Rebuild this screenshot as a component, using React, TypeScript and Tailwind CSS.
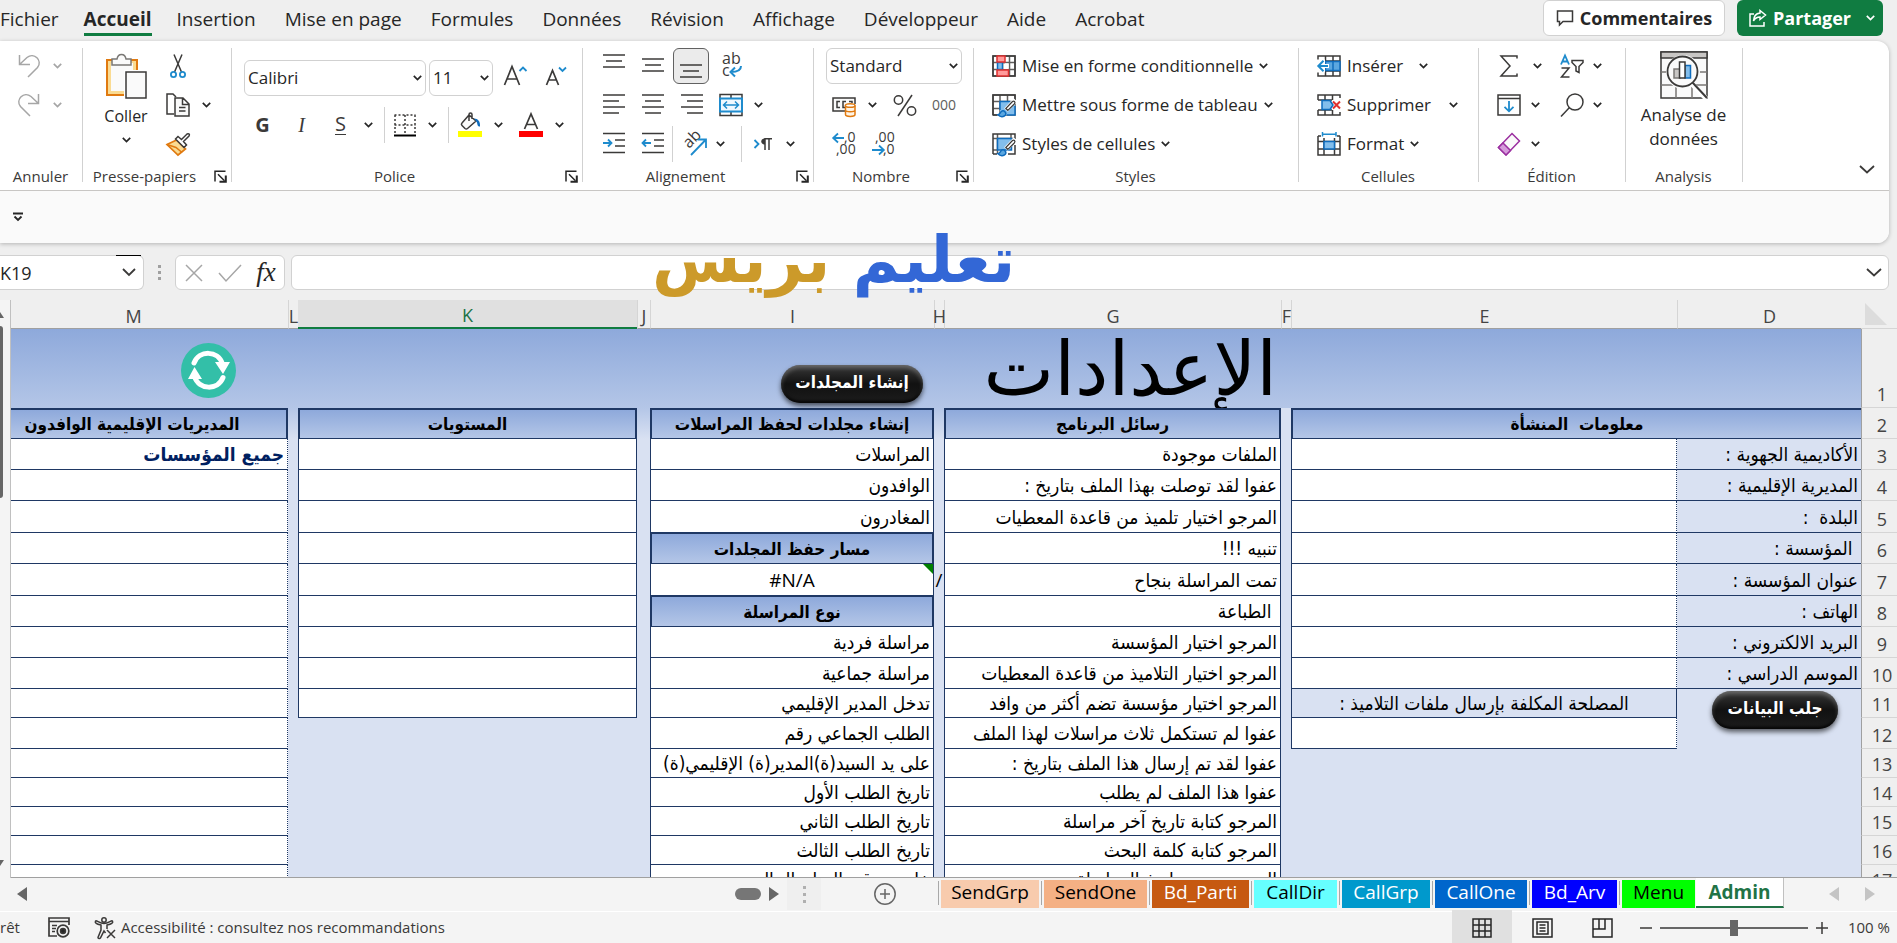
import type { ReactNode } from "react"
import clsx from "clsx"

const MENU = ["Fichier", "Accueil", "Insertion", "Mise en page", "Formules", "Données", "Révision", "Affichage", "Développeur", "Aide", "Acrobat"]

const SHEETS = [
  { name: "SendGrp", style: "w-[98px] bg-[#f8cbad] text-black" },
  { name: "SendOne", style: "w-[103px] bg-[#f4b084] text-black" },
  { name: "Bd_Parti", style: "w-[97px] bg-[#c65911] text-white" },
  { name: "CallDir", style: "w-[83px] bg-[#66ffff] text-black" },
  { name: "CallGrp", style: "w-[88px] bg-[#0099cc] text-white" },
  { name: "CallOne", style: "w-[92px] bg-[#0066cc] text-white" },
  { name: "Bd_Arv", style: "w-[85px] bg-[#0000ff] text-white" },
  { name: "Menu", style: "w-[73px] bg-[#00ff00] text-black" },
]

type Row = { n: number; h: string; d?: string; g: string; i: string; iHead?: boolean }

const ROWS: Row[] = [
  { n: 3, h: "h-[31px]", d: "الأكاديمية الجهوية :", g: "الملفات موجودة", i: "المراسلات" },
  { n: 4, h: "h-[31px]", d: "المديرية الإقليمية :", g: "عفوا لقد توصلت بهذا الملف بتاريخ :", i: "الوافدون" },
  { n: 5, h: "h-[32px]", d: "البلدة\u00a0 :", g: "المرجو اختيار تلميذ من قاعدة المعطيات", i: "المغادرون" },
  { n: 6, h: "h-[31px]", d: "\u00a0المؤسسة :", g: "تنبيه !!!", i: "مسار حفظ المجلدات", iHead: true },
  { n: 7, h: "h-[32px]", d: "عنوان المؤسسة :", g: "تمت المراسلة بنجاح", i: "#N/A" },
  { n: 8, h: "h-[31px]", d: "الهاتف :", g: "\u00a0الطباعة", i: "نوع المراسلة", iHead: true },
  { n: 9, h: "h-[31px]", d: "البريد الالكتروني :", g: "المرجو اختيار المؤسسة", i: "مراسلة فردية" },
  { n: 10, h: "h-[31px]", d: "الموسم الدراسي :", g: "المرجو اختيار التلاميذ من قاعدة المعطيات", i: "مراسلة جماعية" },
  { n: 11, h: "h-[29px]", g: "المرجو اختيار مؤسسة تضم أكثر من وافد", i: "تدخل المدير الإقليمي" },
  { n: 12, h: "h-[31px]", g: "عفوا لم تستكمل ثلاث مراسلات لهذا الملف", i: "الطلب الجماعي رقم" },
  { n: 13, h: "h-[29px]", g: "عفوا لقد تم إرسال هذا الملف بتاريخ :", i: "على يد السيد(ة)المدير(ة) الإقليمي(ة)" },
  { n: 14, h: "h-[29px]", g: "عفوا هذا الملف لم يطلب", i: "تاريخ الطلب الأول" },
  { n: 15, h: "h-[29px]", g: "المرجو كتابة تاريخ آخر مراسلة", i: "تاريخ الطلب الثاني" },
  { n: 16, h: "h-[29px]", g: "المرجو كتابة كلمة البحث", i: "تاريخ الطلب الثالث" },
  { n: 17, h: "h-[29px]", g: "المرجو تحديد تاريخ المراسلة", i: "خاتم وتوقيع السلم الحالي" },
]

const DARK = "#3b3a39"
const BLUE = "#1e8bcd"

function Svg({ children, w = 24, h = 24 }: { children: ReactNode; w?: number; h?: number }) {
  return (
    <svg width={w} height={h} viewBox={`0 0 ${w} ${h}`} fill="none" stroke={DARK} strokeWidth="1.5" className="shrink-0 overflow-visible" aria-hidden="true">
      {children}
    </svg>
  )
}

function Chevron({ className = "text-[#262626]" }: { className?: string }) {
  return (
    <svg width="9" height="6" viewBox="0 0 9 6" fill="none" stroke="currentColor" strokeWidth="1.7" className={clsx("shrink-0", className)} aria-hidden="true">
      <path d="M0.8 0.8 4.5 4.5 8.2 0.8" />
    </svg>
  )
}

function Btn({ label, className, children }: { label: string; className: string; children: ReactNode }) {
  return (
    <button aria-label={label} className={clsx("flex h-9 shrink-0 items-center justify-center", className)}>
      {children}
    </button>
  )
}

function Arrow({ label, className, tone }: { label: string; className: string; tone?: string }) {
  return (
    <Btn label={label} className={className}>
      <Chevron className={tone} />
    </Btn>
  )
}

function Line({ children, className }: { children: ReactNode; className?: string }) {
  return <div className={clsx("flex h-[39px] items-center", className)}>{children}</div>
}

function Sep({ className }: { className?: string }) {
  return <div className={clsx("h-9 w-px shrink-0 bg-[#d1d1d1]", className)} />
}

function Group({ label, launcher, className, body, children }: { label: string; launcher?: boolean; className: string; body?: string; children: ReactNode }) {
  return (
    <section className={clsx("relative flex shrink-0 flex-col pt-[5px]", className)}>
      <div className={clsx("h-[117px]", body)}>{children}</div>
      <div className="flex h-[26px] items-center">
        <span className={clsx("flex-1 text-center text-[15px] whitespace-nowrap text-[#3b3a39]", launcher ? "pr-2" : "pr-[2px]")}>{label}</span>
        {launcher && (
          <button aria-label={`Paramètres ${label}`} className="mr-[5px]">
            <Svg w={13} h={13}>
              <g stroke="#262626">
                <path d="M1 11.5V1.2h10.5M4 4.2l6.5 6.5" />
                <path d="M11.8 5.5v6.3H5.5" strokeWidth="2" />
              </g>
            </Svg>
          </button>
        )}
      </div>
      <div className="absolute top-[7px] right-0 h-[134px] w-px bg-[#d1d1d1]" />
    </section>
  )
}

function Select({ label, value, className }: { label: string; value: string; className: string }) {
  return (
    <div className={clsx("relative shrink-0", className)}>
      <select aria-label={label} className="h-9 w-full appearance-none rounded-md border border-[#d1d1d1] bg-white pl-[3px] text-[17px] text-[#262626]">
        <option>{value}</option>
      </select>
      <Chevron className="pointer-events-none absolute top-[15px] right-1 text-[#262626]" />
    </div>
  )
}

function Lines({ y, x }: { y: number[]; x: [number, number][] }) {
  return (
    <Svg>
      {y.map((v, k) => (
        <path key={v} d={`M${x[k][0]} ${v}H${x[k][1]}`} />
      ))}
    </Svg>
  )
}

function Brush() {
  return (
    <g>
      <path d="M23.5 7 14 17" stroke="#fff" strokeWidth="5" />
      <path d="M22.5 8.5c.8.8.6 1.6-.2 2.5l-6.500 6.500-2-2L20 9c.9-.9 1.700-1.200 2.500-.5z" fill="#fff" strokeWidth="1.200" />
      <path d="M6 21.800c2-.2 2-2 3.300-3.300a2.800 2.800 0 0 1 4 3.800c-1.800 2-5 1.800-7.300-.5z" fill="#5ba7e0" stroke="#0f6cbd" />
    </g>
  )
}

function FormatIcon({ kind }: { kind: "cond" | "table" | "style" }) {
  return (
    <Svg>
      {kind === "cond" && (
        <>
          <path d="M1 2h22v20H1zM1 8.500h22M1 15.500h22M6 2v20M17.500 2v20M12 2v20" stroke="#605e5c" />
          <path d="M1 2h22v20H1z" />
          <path d="M5.500 8.500h5v7h-5z" fill="#83beec" stroke="#0f6cbd" />
          <path d="M11.500 9.500h5v5.500h-5z" fill="#fff" stroke="none" />
          <path d="M5 2h8v6H5zM5 16h11.500v6H5z" fill="#ff9b9b" stroke="#e03030" />
        </>
      )}
      {kind === "table" && (
        <>
          <path d="M1 2h22v20H1zM1 8.500h22M1 15.500h7M8 2v20M15.500 2v7" stroke="#605e5c" />
          <path d="M8 8.500h15V22H8z" fill="#83beec" stroke="none" />
          <path d="M8 17V8.500h10M23 13v9h-8" stroke="#0f6cbd" />
          <path d="M1 22V2h22v5M1 22h4" />
          <Brush />
        </>
      )}
      {kind === "style" && (
        <>
          <path d="M1 6.500h22M5.500 2v20M1 18h5M19 2v4.500" stroke="#605e5c" />
          <path d="M5.500 6.500h14V18h-14z" fill="#83beec" stroke="#0f6cbd" />
          <path d="M1 22V2h22v5M1 22h4M23 13v9h-7" />
          <Brush />
        </>
      )}
    </Svg>
  )
}

function CellsIcon({ kind }: { kind: "insert" | "delete" | "format" }) {
  return (
    <Svg>
      {kind === "insert" && (
        <>
          <path d="M1 6V2h22v20H1v-4M8.500 2v5M16 2v20M8.500 17v5M1 17h22M1 7h22" />
          <path d="M8.500 7.500H23v9H8.500z" fill="#5ba7e0" stroke="#0f6cbd" />
          <path d="M16 7.500v9" stroke="#0f6cbd" />
          <path d="M0 5.500h8v13H0z" fill="#fff" stroke="none" />
          <path d="M12 12H1.500M6.500 6.800 1.300 12l5.200 5.200" stroke="#fff" strokeWidth="4" />
          <path d="M11 12H1.500M6.500 6.800 1.300 12l5.200 5.200" stroke={BLUE} strokeWidth="2" />
        </>
      )}
      {kind === "delete" && (
        <>
          <path d="M1 7V2h22v3M1 7h14M8 2v5M15.500 2v5M1 17v5h22v-3M1 17h14M8 17v5M15.500 17v5" />
          <path d="M5 7.500h8l3 4.500-3 4.500H5z" fill="#83beec" stroke="#0f6cbd" />
          <path d="m16 8.500 7 7M23 8.500l-7 7" stroke="#e03030" strokeWidth="2" />
        </>
      )}
      {kind === "format" && (
        <>
          <path d="M1 4v19h22V4M1 4h3M20 4h3M1 9.500h22M1 17h22M7 6v17M17.500 6v17" />
          <path d="M7 9.500h10.500V17H7z" fill="#83beec" stroke="#0f6cbd" />
          <path d="M5.500 0v4.500M19 0v4.500M5.500 2.200H19" stroke={BLUE} />
        </>
      )}
    </Svg>
  )
}

function TextBtn({ icon, text, arrow }: { icon: ReactNode; text: string; arrow?: string }) {
  return (
    <Line>
      <button className="flex items-center gap-[6px] text-[17px] whitespace-nowrap text-[#262626]">
        {icon}
        {text}
        {!arrow && <Chevron />}
      </button>
      {arrow && <Arrow label={`Options ${text}`} className={arrow} />}
    </Line>
  )
}

function MenuBar() {
  return (
    <header className="flex h-[41px] items-start pr-[14px]">
      <nav className="flex gap-[29px] pt-[7px]">
        {MENU.map((item) => (
          <a
            key={item}
            href="#"
            className={clsx("border-b-[3px] pb-px text-[19px] leading-[25px] whitespace-nowrap text-[#262626]", item === "Accueil" ? "-mx-1 border-[#107c41] font-bold" : "border-transparent")}
          >
            {item}
          </a>
        ))}
      </nav>
      <div className="ml-auto flex gap-3">
        <button className="flex h-9 w-[182px] items-center justify-center gap-[6px] rounded-md border border-[#d1d1d1] bg-white text-lg font-bold text-[#262626]">
          <Svg w={18} h={18}>
            <path d="M1.500 2h15v10.500H7L3.500 16v-3.500h-2z" />
          </Svg>
          Commentaires
        </button>
        <button className="flex h-9 w-[146px] items-center gap-[6px] rounded-md bg-[#107c41] pl-3 text-lg font-bold text-white">
          <svg width="18" height="18" viewBox="0 0 18 18" fill="none" stroke="#fff" strokeWidth="1.500" aria-hidden="true">
            <path d="M5 5H1v12h14v-4" />
            <path d="M11 1.500 16.500 6 11 10.500V8c-3 0-5 1-6.500 4 .2-4.500 2.500-7.500 6.500-8z" />
          </svg>
          Partager
          <Chevron className="mr-2 ml-auto text-white" />
        </button>
      </div>
    </header>
  )
}

function Ribbon() {
  return (
    <div className="mr-2 rounded-r-xl bg-white shadow-[0_1px_4px_rgba(0,0,0,0.25)]">
      <div className="flex h-[150px] border-b border-[#c8c6c4]">
        <Group label="Annuler" className="w-[83px]" body="pl-[15px]">
          <Line>
            <Btn label="Annuler" className="w-7">
              <Svg>
                <path d="M2.500 1v9.500H13M2.800 10.200 10 3.500c7-5.500 16 3 10.500 10L11 23" stroke="#a6a6a6" />
              </Svg>
            </Btn>
            <Arrow label="Historique annuler" className="w-7" tone="text-[#a6a6a6]" />
          </Line>
          <Line>
            <Btn label="Rétablir" className="w-7">
              <Svg>
                <path d="M21.500 1v9.500H11M21.200 10.200 14 3.500C7 -2 -2 6.500 3.500 13.500L13 23" stroke="#a6a6a6" />
              </Svg>
            </Btn>
            <Arrow label="Historique rétablir" className="w-7" tone="text-[#a6a6a6]" />
          </Line>
        </Group>

        <Group label="Presse-papiers" launcher className="w-[149px]" body="flex gap-[15px] pl-5">
          <button className="flex w-[46px] flex-col items-center pt-[7px] text-base text-[#262626]">
            <Svg w={42} h={46}>
              <path d="M2 7h30v35H2z" fill="#fadb92" stroke="#e07a10" strokeWidth="2" />
              <path d="M6 10h22v28H6z" fill="#fafafa" stroke="none" />
              <path d="M7 12V6h5c1-6 8-6 9 0h5v6z" fill="#fafafa" stroke="#797774" />
              <path d="M19 17h23v29H19z" fill="#fff" stroke="none" />
              <path d="M21 19h20v26H21z" fill="#fafafa" />
            </Svg>
            <span className="leading-[34px]">Coller</span>
            <Chevron className="mt-1 text-[#262626]" />
          </button>
          <div>
            <Line>
              <Btn label="Couper" className="w-7">
                <Svg>
                  <path d="M8 0.500 15.500 18M16 0.500 8.500 18" />
                  <circle cx="7.500" cy="20.500" r="2.600" stroke={BLUE} strokeWidth="1.800" />
                  <circle cx="16.500" cy="20.500" r="2.600" stroke={BLUE} strokeWidth="1.800" />
                </Svg>
              </Btn>
            </Line>
            <Line>
              <Btn label="Copier" className="w-7">
                <Svg>
                  <path d="M8 21H1V1h6l3 3" />
                  <path d="M9 5h8l6 6v12H9zM16.500 5v6.500H23M13 14.500h6.500M13 18h6.500" fill="#fafafa" />
                </Svg>
              </Btn>
              <Arrow label="Options copier" className="w-7" />
            </Line>
            <Line>
              <Btn label="Reproduire la mise en forme" className="w-7">
                <Svg>
                  <path d="M1 12.500 10.500 8l9 9L12 23z" fill="#fadb92" stroke="#e07a10" strokeWidth="1.700" />
                  <path d="m1 12.500 9 3 6 5" stroke="#e07a10" />
                  <path d="M9.500 7 12 4.500l3.500 3L21 2c2-1 3 .5 2 2l-5.500 5.500 3 3.500-2.500 2.500z" fill="#fff" />
                </Svg>
              </Btn>
            </Line>
          </div>
        </Group>

        <Group label="Police" launcher className="w-[351px]" body="flex flex-col gap-2 pt-3">
          <Line className="pl-3">
            <Select label="Police" value="Calibri" className="w-[182px]" />
            <Select label="Taille" value="11" className="ml-[3px] w-16" />
            <Btn label="Agrandir la police" className="w-[43px]">
              <Svg>
                <path d="M1.500 19 9 0.500 16.500 19M4 13h10" strokeWidth="1.700" />
                <path d="M16.500 5 20 1.500 23.500 5" stroke={BLUE} strokeWidth="1.800" />
              </Svg>
            </Btn>
            <Btn label="Réduire la police" className="w-[39px]">
              <Svg>
                <path d="M2.500 19 8.500 4.500 14.500 19M4.500 14h8" strokeWidth="1.700" />
                <path d="M15 1.500 18.500 5 22 1.500" stroke={BLUE} strokeWidth="1.800" />
              </Svg>
            </Btn>
          </Line>
          <Line className="pl-[11px] text-xl text-[#3b3a39]">
            <Btn label="Gras" className="w-[39px]">
              <b>G</b>
            </Btn>
            <Btn label="Italique" className="w-[39px]">
              <i className="font-['Liberation_Serif',serif]">I</i>
            </Btn>
            <Btn label="Souligné" className="w-[39px]">
              <span className="border-b-[1.5px] border-[#3b3a39] leading-[20px]">S</span>
            </Btn>
            <Arrow label="Options souligné" className="w-4" />
            <Sep className="mx-2" />
            <Btn label="Bordures" className="w-6">
              <Svg>
                <path d="M1.500 2h21M1.500 12h21M2 2v19M12 2v19M22 2v19" strokeDasharray="2 2" />
                <path d="M1 22.500h22" stroke="#000" strokeWidth="2" />
              </Svg>
            </Btn>
            <Arrow label="Options bordures" className="w-[31px]" />
            <Sep className="mr-2" />
            <Btn label="Couleur de remplissage" className="w-[26px]">
              <Svg>
                <path d="M11 2 4 10c-1 1-1 1.500 0 2.500l3 3c1 .8 1.500.8 2.500 0L18 8z M11 8V1.500c0-2 3-2 3 0V6" fill="#fafafa" />
                <path d="M16 5.500c4 0 6.500 3 6 8-2 .5-2.500-1-3-4" fill="#0f6cbd" stroke="none" />
                <path d="M0 18h24v6H0z" fill="#ff0" stroke="none" />
              </Svg>
            </Btn>
            <Arrow label="Options remplissage" className="w-[30px]" />
            <Btn label="Couleur de police" className="w-9">
              <Svg>
                <path d="M5.500 16 12 1l6.500 15M7.500 11.500h9" strokeWidth="1.700" />
                <path d="M0 18h24v6H0z" fill="red" stroke="none" />
              </Svg>
            </Btn>
            <Arrow label="Options couleur" className="w-5" />
          </Line>
        </Group>

        <Group label="Alignement" launcher className="w-[231px]" body="pl-[11px]">
          <Line>
            <Btn label="Aligner en haut" className="w-[39px]">
              <Lines y={[1, 7, 13]} x={[[1, 23], [4, 20], [1, 23]]} />
            </Btn>
            <Btn label="Centrer verticalement" className="w-[39px]">
              <Lines y={[5, 11, 17]} x={[[1, 23], [4, 20], [1, 23]]} />
            </Btn>
            <div className="w-[39px] pl-px">
              <Btn label="Aligner en bas" className="w-9 rounded-md border border-[#616161] bg-[#ebebeb]">
                <Lines y={[11, 17, 23]} x={[[1, 23], [4, 20], [1, 23]]} />
              </Btn>
            </div>
            <Btn label="Renvoyer à la ligne" className="w-[39px]">
              <Svg>
                <g fill={DARK} stroke="none" fontSize="16">
                  <text x="3" y="10">ab</text>
                  <text x="3" y="22">c</text>
                </g>
                <path d="M22 12c0 5-4 6-10 6M16 13.500 11.500 18l4.500 4.500" stroke={BLUE} strokeWidth="2" />
              </Svg>
            </Btn>
          </Line>
          <Line>
            <Btn label="Aligner à gauche" className="w-[39px]">
              <Lines y={[2, 8, 14, 20]} x={[[1, 23], [1, 17], [1, 23], [1, 17]]} />
            </Btn>
            <Btn label="Centrer" className="w-[39px]">
              <Lines y={[2, 8, 14, 20]} x={[[1, 23], [4, 20], [1, 23], [4, 20]]} />
            </Btn>
            <Btn label="Aligner à droite" className="w-[39px]">
              <Lines y={[2, 8, 14, 20]} x={[[1, 23], [7, 23], [1, 23], [7, 23]]} />
            </Btn>
            <Btn label="Fusionner et centrer" className="w-[39px]">
              <Svg>
                <path d="M1 1.500h22v21H1zM12 1.500V6M12 18v4.500" />
                <path d="M1 5.500h22v13H1z" fill="#f0f8ff" stroke={BLUE} strokeWidth="2" />
                <path d="M4.500 12h15M8 8.500 4.500 12 8 15.500M16 8.500l3.500 3.500-3.500 3.500" stroke={BLUE} />
              </Svg>
            </Btn>
            <Arrow label="Options fusion" className="w-4" />
          </Line>
          <Line>
            <Btn label="Augmenter le retrait" className="w-[39px]">
              <Svg>
                <path d="M1 1.500h22M13 8h10M13 14h10M1 20.500h22" />
                <path d="M1 11h8M6 7.500 9.500 11 6 14.500" stroke={BLUE} strokeWidth="1.800" />
              </Svg>
            </Btn>
            <Btn label="Diminuer le retrait" className="w-[39px]">
              <Svg>
                <path d="M1 1.500h22M13 8h10M13 14h10M1 20.500h22" />
                <path d="M10 11H2M5 7.500 1.500 11 5 14.500" stroke={BLUE} strokeWidth="1.800" />
              </Svg>
            </Btn>
            <Sep className="mr-1" />
            <Btn label="Orientation" className="w-9">
              <Svg>
                <text fill={DARK} stroke="none" fontSize="16" transform="translate(6 17) rotate(-45)">ab</text>
                <path d="M8 23 22.500 8M14.500 7.500h8.500V16" stroke={BLUE} strokeWidth="1.800" />
              </Svg>
            </Btn>
            <Arrow label="Options orientation" className="w-[14px]" />
            <Sep className="ml-[14px]" />
            <Btn label="Sens du texte" className="w-10">
              <Svg>
                <path d="m4.500 8 4 4-4 4" stroke={BLUE} strokeWidth="1.800" />
                <path d="M15 6.500c-5 0-5 6 0 6z" fill={DARK} stroke="none" />
                <path d="M22 6.800h-7V18M19 7v11" />
              </Svg>
            </Btn>
            <Arrow label="Options sens" className="w-4" />
          </Line>
        </Group>

        <Group label="Nombre" launcher className="w-[160px]" body="pl-3">
          <Line>
            <Select label="Format de nombre" value="Standard" className="w-[136px]" />
          </Line>
          <Line>
            <Btn label="Format comptabilité" className="w-9">
              <Svg>
                <path d="M1 5h22v13H1z" fill="#fafafa" />
                <path d="M8 8.500H5v6h3M14 8.500h-3v6h2M20 10V8.500h-3" />
                <path d="M13 11h11v13H13z" fill="#fff" stroke="none" />
                <path d="M13.500 12.500v9c0 2.500 9.500 2.500 9.500 0v-9M13.500 17c0 2.300 9.500 2.300 9.500 0" stroke="#e07a10" fill="#fff4e5" />
                <ellipse cx="18.200" cy="12.500" rx="4.800" ry="1.800" stroke="#e07a10" fill="#fff" />
              </Svg>
            </Btn>
            <Arrow label="Options comptabilité" className="w-5" />
            <Btn label="Pourcentage" className="w-[46px]">
              <Svg>
                <circle cx="5.500" cy="7" r="4.200" />
                <circle cx="18.500" cy="18" r="4.200" />
                <path d="M19 2 5 23" />
              </Svg>
            </Btn>
            <Btn label="Séparateur de milliers" className="w-8 text-sm text-[#605e5c]">
              000
            </Btn>
          </Line>
          <Line>
            <Btn label="Ajouter une décimale" className="w-9">
              <Svg>
                <path d="M12 6H1M6 1.500 1.200 6 6 10.500" stroke={BLUE} strokeWidth="1.800" />
                <g fill={DARK} stroke="none" fontSize="14">
                  <text x="12" y="10">,0</text>
                  <text x="4" y="22">,00</text>
                </g>
              </Svg>
            </Btn>
            <Btn label="Réduire les décimales" className="w-[42px]">
              <Svg>
                <path d="M1 18h11M8 13.500l4.800 4.500L8 22.500" stroke={BLUE} strokeWidth="1.800" />
                <g fill={DARK} stroke="none" fontSize="14">
                  <text x="4" y="10">,00</text>
                  <text x="12" y="22">,0</text>
                </g>
              </Svg>
            </Btn>
          </Line>
        </Group>

        <Group label="Styles" className="w-[325px]" body="pl-[18px]">
          <TextBtn icon={<FormatIcon kind="cond" />} text="Mise en forme conditionnelle" />
          <TextBtn icon={<FormatIcon kind="table" />} text="Mettre sous forme de tableau" />
          <TextBtn icon={<FormatIcon kind="style" />} text="Styles de cellules" />
        </Group>

        <Group label="Cellules" className="w-[180px]" body="pl-[18px]">
          <TextBtn icon={<CellsIcon kind="insert" />} text="Insérer" arrow="w-10" />
          <TextBtn icon={<CellsIcon kind="delete" />} text="Supprimer" arrow="w-11" />
          <TextBtn icon={<CellsIcon kind="format" />} text="Format" />
        </Group>

        <Group label="Édition" className="w-[147px]" body="pl-[14px]">
          <Line>
            <Btn label="Somme" className="w-8">
              <Svg>
                <path d="M20 4.500V2H4l9 10-9 10h16v-2.500" />
              </Svg>
            </Btn>
            <Arrow label="Options somme" className="w-6" />
            <Btn label="Trier et filtrer" className="ml-[7px] w-8">
              <Svg>
                <path d="M1 10.500 5 1.500l4 9M2.500 7.500h5" stroke={BLUE} strokeWidth="1.800" />
                <path d="M1.500 14H9l-7.500 9H9.500M12 6.500h11v2l-4 4v6l-3-1.500v-4.500l-4-4z" />
              </Svg>
            </Btn>
            <Arrow label="Options tri" className="w-[18px]" />
          </Line>
          <Line>
            <Btn label="Remplissage" className="w-8">
              <Svg>
                <path d="M1 2h22v20H1zM1 5.500h22" />
                <path d="M12 8v10M7.500 13.800 12 18.300l4.500-4.500" stroke={BLUE} strokeWidth="1.800" />
              </Svg>
            </Btn>
            <Arrow label="Options recopie" className="w-5" />
            <Btn label="Rechercher" className="ml-[11px] w-8">
              <Svg>
                <circle cx="15" cy="9" r="8" />
                <path d="M9.500 14.500 1 23.500" />
              </Svg>
            </Btn>
            <Arrow label="Options recherche" className="w-[18px]" />
          </Line>
          <Line>
            <Btn label="Effacer" className="w-8">
              <Svg>
                <path d="m15 1.500 7.500 7.500L9 23 1.500 15.500z" fill="#fafafa" stroke="#9b2fa0" />
                <path d="m6 11 7.500 7.500L9 23l-7.500-7.500z" fill="#d59bdb" stroke="#9b2fa0" />
              </Svg>
            </Btn>
            <Arrow label="Options effacer" className="w-5" />
          </Line>
        </Group>

        <Group label="Analysis" className="w-[117px]">
          <button className="flex w-full flex-col items-center pt-[5px] pr-[2px] text-[17px] leading-6 text-[#262626]">
            <Svg w={48} h={48}>
              <path d="M1 1h46v46H1z" fill="#fafafa" />
              <path d="M1 1h46v6H1z" fill="#c8c6c4" />
              <path d="M1 21h46M1 34h46M16 34v13M32 34v13M16 7v5M32 7v5" stroke="#797774" />
              <circle cx="23" cy="21" r="17" fill="#fafafa" stroke="none" />
              <circle cx="22.500" cy="20.500" r="15" strokeWidth="1.800" />
              <path d="M14 18h6v9h-6z" fill="#c8c6c4" stroke="#797774" />
              <path d="M25 14.500h5.500V27H25z" fill="#83beec" stroke="#0f6cbd" />
              <path d="M19.500 11h5.500v16h-5.500z" fill="#fff" />
              <path d="M32 33 46.500 48" stroke="#fff" strokeWidth="5" />
              <path d="M32.500 31.500 47 47" strokeWidth="2" />
            </Svg>
            <span className="pt-1">Analyse de</span>
            <span>données</span>
          </button>
        </Group>
        <button aria-label="Réduire le ruban" className="mt-auto mr-[14px] mb-4 ml-auto">
          <Svg w={16} h={9}>
            <path d="m1 1 7 6.500L15 1" strokeWidth="1.800" />
          </Svg>
        </button>
      </div>
      <div className="flex h-[52px] items-center rounded-br-xl bg-[#fafafa] pl-3">
        <button aria-label="Personnaliser la barre d'outils">
          <Svg w={12} h={10}>
            <path d="M1 1.500h10M2.500 4.500 6 8l3.500-3.500" stroke="#262626" strokeWidth="1.800" />
          </Svg>
        </button>
      </div>
    </div>
  )
}

function FormulaBar() {
  return (
    <div className="mt-3 mr-2 flex h-[35px] items-center">
      <div className="flex h-full w-36 items-center rounded-r-md border border-l-0 border-[#d1d1d1] bg-white">
        <input aria-label="Zone Nom" defaultValue="K19" className="w-[122px] text-lg text-[#262626]" />
        <Svg w={14} h={9}>
          <path d="m1 1 6 6 6-6" strokeWidth="1.800" />
          <path d="M-6 -12.500h25" stroke="#000" strokeWidth="1" />
        </Svg>
      </div>
      <div className="flex w-[31px] flex-col items-center gap-[3px]">
        <i className="size-[3px] bg-[#a0a0a0]" />
        <i className="size-[3px] bg-[#a0a0a0]" />
        <i className="size-[3px] bg-[#a0a0a0]" />
      </div>
      <div className="flex h-full w-[110px] items-center rounded-md border border-[#d1d1d1] bg-white">
        <Btn label="Annuler la saisie" className="w-9">
          <Svg w={18} h={18}>
            <path d="m1 1 16 16M17 1 1 17" stroke="#a6a6a6" />
          </Svg>
        </Btn>
        <Btn label="Valider" className="w-9">
          <Svg w={24} h={18}>
            <path d="m1 9 7 8L23 1" stroke="#a6a6a6" />
          </Svg>
        </Btn>
        <Btn label="Insérer une fonction" className="w-9 font-['Liberation_Serif',serif] text-[27px] text-[#262626] italic">
          fx
        </Btn>
      </div>
      <div className="ml-[6px] flex h-full flex-1 items-center rounded-md border border-[#d1d1d1] bg-white pr-[6px]">
        <input aria-label="Barre de formule" className="min-w-0 flex-1 px-2 text-lg" />
        <Svg w={16} h={9}>
          <path d="m1 1 7 6.500L15 1" strokeWidth="1.800" />
        </Svg>
      </div>
    </div>
  )
}

const HEAD = "border-b border-[#1f3864] bg-linear-to-b from-[#8ea9db] to-[#b4c6e7] p-0 text-center text-[17px] leading-[20px] font-bold"
const CELL = "border-b border-[#1f3864] px-[3px] py-0 leading-[20px]"
const GAP = "p-0"

function PillButton({ text, className }: { text: string; className: string }) {
  return (
    <button
      className={clsx(
        "absolute h-[38px] rounded-full bg-linear-to-b from-[#3a3a3a] via-[#111] to-[#1c1c1c] pb-[3px] font-['DejaVu_Sans_Condensed',sans-serif] text-[17px] font-bold text-white shadow-[0_3px_5px_rgba(0,0,0,0.6),inset_0_3px_4px_rgba(255,255,255,0.25),inset_0_-2px_3px_rgba(0,0,0,0.9)]",
        className,
      )}
    >
      {text}
    </button>
  )
}

function ColHead({ name, active }: { name: string; active?: boolean }) {
  return (
    <th
      scope="col"
      className={clsx(
        "h-[29px] border-b p-0 pt-[3px] text-lg leading-[24px] font-normal",
        active ? "border-b-2 border-b-[#107c41] bg-[#e0e0e0] text-[#217346]" : "border-l border-[#d5d5d5] border-b-[#a0a0a0] text-[#444]",
      )}
    >
      <div className="flex justify-center">{name}</div>
    </th>
  )
}

function Grid() {
  return (
    <div dir="rtl" className="relative flex-1 overflow-hidden border-b border-[#a0a0a0]">
      <table className="w-[1919px] table-fixed border-separate border-spacing-0 font-['DejaVu_Sans_Condensed',sans-serif] text-[19px] text-black">
        <colgroup>
          <col className="w-9" />
          <col className="w-[184px]" />
          <col className="w-[386px]" />
          <col className="w-[10px]" />
          <col className="w-[337px]" />
          <col className="w-[10px]" />
          <col className="w-[284px]" />
          <col className="w-[13px]" />
          <col className="w-[339px]" />
          <col className="w-[10px]" />
          <col className="w-[310px]" />
        </colgroup>
        <thead className="font-['Open_Sans',sans-serif]">
          <tr>
            <td className="border-b border-[#d5d5d5] p-0">
              <svg width="22" height="22" viewBox="0 0 22 22" className="mr-[10px]" aria-hidden="true">
                <path d="M0 0v22h22z" fill="#dcdcdc" />
              </svg>
            </td>
            <ColHead name="D" />
            <ColHead name="E" />
            <ColHead name="F" />
            <ColHead name="G" />
            <ColHead name="H" />
            <ColHead name="I" />
            <ColHead name="J" />
            <ColHead name="K" active />
            <ColHead name="L" />
            <ColHead name="M" />
          </tr>
        </thead>
        <tbody className="bg-[#d9e1f2]">
          <tr>
            <RowHead n={1} h="h-[79px]" />
            <td colSpan={2} className="bg-linear-to-b from-[#8ea9db] to-[#b4c6e7] p-0" />
            <td colSpan={2} className="bg-linear-to-b from-[#8ea9db] to-[#b4c6e7] p-0 pr-[14px]">
              <div className="h-[79px] overflow-hidden font-['DejaVu_Sans',sans-serif] text-[75px] leading-[80px] whitespace-nowrap">الإعدادات</div>
            </td>
            <td colSpan={6} className="bg-linear-to-b from-[#8ea9db] to-[#b4c6e7] p-0" />
          </tr>
          <tr>
            <RowHead n={2} h="h-[31px]" />
            <th colSpan={2} className={clsx(HEAD, "border-t-2 border-l-2")}>معلومات&nbsp; المنشأة</th>
            <td className={GAP} />
            <th className={clsx(HEAD, "border-x-2 border-t-2")}>رسائل البرنامج</th>
            <td className="bg-linear-to-b from-[#b4c6e7] to-[#d9e1f2] p-0" />
            <th className={clsx(HEAD, "border-x-2 border-t-2")}>إنشاء مجلدات لحفظ المراسلات</th>
            <td className="bg-linear-to-b from-[#b4c6e7] to-[#d9e1f2] p-0" />
            <th className={clsx(HEAD, "border-x-2 border-t-2")}>المستويات</th>
            <td className="bg-linear-to-b from-[#b4c6e7] to-[#d9e1f2] p-0" />
            <th className={clsx(HEAD, "border-t-2 border-r-2")}>المديريات الإقليمية الوافدون</th>
          </tr>
          {ROWS.map((row) => (
            <tr key={row.n}>
              <RowHead n={row.n} h={row.h} />
              <td className={row.d ? CELL : GAP}>
                <CellText text={row.d} />
              </td>
              <td
                className={clsx(
                  row.n <= 12 && "border-b border-l border-[#1f3864] p-0 text-center leading-[20px]",
                  row.n <= 12 && row.n !== 11 && "border-r border-r-[#1f3864] bg-white [border-right-style:dotted]",
                  row.n === 11 && "border-r",
                )}
              >
                {row.n === 11 && <CellText text="المصلحة المكلفة بإرسال ملفات التلاميذ :" />}
              </td>
              <td className={GAP} />
              <td className={clsx(CELL, "border-x bg-white")}>
                <CellText text={row.g} />
              </td>
              <td className="overflow-hidden p-0 text-center font-['Open_Sans',sans-serif] leading-[20px]">{row.n === 7 && "/"}</td>
              {row.iHead ? (
                <th className={clsx(HEAD, "border-x-2 border-t")}>
                  <CellText text={row.i} />
                </th>
              ) : (
                <td className={clsx(CELL, "relative border-x bg-white", row.n === 7 && "text-center font-['Open_Sans',sans-serif]")} dir={row.n === 7 ? "ltr" : undefined}>
                  <CellText text={row.i} />
                  {row.n === 7 && <i className="absolute top-0 right-0 size-[10px] bg-[#008000] [clip-path:polygon(0_0,100%_0,100%_100%)]" />}
                </td>
              )}
              <td className={GAP} />
              <td className={row.n <= 11 ? "border-x border-b border-[#1f3864] bg-white p-0" : GAP} />
              <td className={GAP} />
              <td className={clsx(CELL, "border-r bg-white font-bold text-[#002060] [border-right-style:dotted]")}>
                {row.n === 3 && <CellText text="جميع المؤسسات" />}
              </td>
            </tr>
          ))}
        </tbody>
      </table>
      <button aria-label="Actualiser" className="absolute top-[43px] right-[1661px]">
        <svg width="55" height="55" viewBox="0 0 55 55" aria-hidden="true">
          <circle cx="27.500" cy="27.500" r="27.500" fill="#33bfa8" />
          <path d="M13 20c5-13 24-13 28.500 1M42 34.500c-5 13-24 13-28.500-1" fill="none" stroke="#fff" strokeWidth="5" strokeLinecap="round" />
          <path d="M34 19h15l-7 12zM21 36H7l6.500-12z" fill="#fff" />
        </svg>
      </button>
      <PillButton text="إنشاء المجلدات" className="top-[65px] right-[974px] w-[142px]" />
      <PillButton text="جلب البيانات" className="top-[391px] right-[59px] w-[126px]" />
    </div>
  )
}

function RowHead({ n, h }: { n: number; h: string }) {
  return (
    <th scope="row" className={clsx("border-b border-l border-[#d5d5d5] border-l-[#a0a0a0] bg-[#efefef] p-0 pl-[5px] text-center align-bottom font-['Open_Sans',sans-serif] text-lg leading-[26px] font-normal text-[#444]", h)}>
      {n}
    </th>
  )
}

function CellText({ text }: { text?: string }) {
  return <div className="h-5 whitespace-nowrap">{text}</div>
}

function VerticalScroll() {
  return (
    <div className="flex w-[11px] shrink-0 flex-col items-start border-r border-[#c0c0c0] bg-[#f4f4f4] pt-3">
      <svg width="4" height="6" viewBox="0 0 4 6" aria-hidden="true">
        <path d="M0 0l4 6H0z" fill="#666" />
      </svg>
      <div className="mt-2 h-[172px] w-[3px] rounded-r bg-[#666]" />
      <svg width="4" height="6" viewBox="0 0 4 6" className="mt-auto mb-3" aria-hidden="true">
        <path d="M0 6l4-6H0z" fill="#666" />
      </svg>
    </div>
  )
}

function Triangle({ flip, tone }: { flip?: boolean; tone: string }) {
  return (
    <svg width="10" height="14" viewBox="0 0 10 14" className={clsx("shrink-0", tone)} fill="currentColor" aria-hidden="true">
      <path d={flip ? "M0 0v14l10-7z" : "M10 0v14L0 7z"} />
    </svg>
  )
}

function SheetBar() {
  return (
    <div className="flex h-[33px] items-start bg-[#f4f4f4]">
      <div className="flex h-8 flex-1 items-center pl-[17px]">
        <Triangle tone="text-[#666]" />
        <div className="ml-auto h-3 w-[26px] rounded-full bg-[#767676]" />
        <div className="mr-2 ml-2">
          <Triangle flip tone="text-[#666]" />
        </div>
      </div>
      <div className="flex h-8 w-[34px] flex-col items-center justify-center gap-1 bg-[#efefef]">
        <i className="size-[3px] bg-[#b0b0b0]" />
        <i className="size-[3px] bg-[#b0b0b0]" />
        <i className="size-[3px] bg-[#b0b0b0]" />
      </div>
      <button aria-label="Nouvelle feuille" className="mr-[40px] ml-[53px] pt-1">
        <Svg w={22} h={24}>
          <circle cx="11" cy="12" r="10.200" stroke="#666" />
          <path d="M6 12h10M11 7v10" stroke="#666" />
        </Svg>
      </button>
      {SHEETS.map((sheet) => (
        <div key={sheet.name} className="flex items-center">
          <span className="mx-[2px] h-6 w-px bg-[#a8a8a8]" />
          <button className={clsx("mt-[2px] h-7 pb-1 text-[19px] leading-[24px]", sheet.style)}>{sheet.name}</button>
        </div>
      ))}
      <button className="ml-px h-[30px] w-[88px] border-r border-b-2 border-r-[#c0c0c0] border-b-[#217346] bg-white text-[19px] leading-[24px] font-bold text-[#217346]">Admin</button>
      <div className="flex h-8 w-[113px] items-center gap-[26px] pl-[45px] text-[#c4c4c4]">
        <Triangle tone="" />
        <Triangle flip tone="" />
      </div>
    </div>
  )
}

function StatusBar() {
  return (
    <footer className="flex h-8 items-center border-t border-white bg-[#f4f4f4] text-[15px] text-[#3b3a39]">
      <span>rêt</span>
      <button aria-label="Enregistrer une macro" className="ml-7">
        <Svg w={22} h={21}>
          <path d="M9 19H1V1h20v7M1 4.500h20M4 8.500h5M4 11.500h4M4 14.500h3" strokeWidth="1.700" />
          <circle cx="15" cy="14" r="5.800" strokeWidth="1.700" />
          <circle cx="15" cy="14" r="2.500" fill="#262626" />
        </Svg>
      </button>
      <button className="ml-6 flex items-center gap-[5px]">
        <Svg w={22} h={22}>
          <circle cx="10" cy="3" r="2.200" />
          <path d="M1.500 4c-1 2 1 3 5.500 4v5L4 20.500c0 1.200 2 1.500 2.500.3L10 14l1.500 2M18.500 4c1 2-1 3-5.500 4v4M1.500 4c1-1.200 4 2.500 8.500 2.500S17.500 2.800 18.500 4" />
          <path d="m13 13 8 8M21 13l-8 8" />
        </Svg>
        Accessibilité : consultez nos recommandations
      </button>
      <div className="ml-auto flex h-full items-center">
        <Btn label="Normal" className="w-[60px] bg-[#e0e0e0]">
          <Svg w={20} h={20}>
            <path d="M1 1h18v18H1zM1 7h18M1 13h18M7 1v18M13 1v18" stroke="#262626" />
          </Svg>
        </Btn>
        <Btn label="Mise en page" className="w-[60px]">
          <Svg w={21} h={20}>
            <path d="M1 1h19v18H1zM5 4h11v12H5z M7.500 7h6M7.500 10h6M7.500 13h6" stroke="#262626" />
          </Svg>
        </Btn>
        <Btn label="Aperçu des sauts de page" className="w-[60px]">
          <Svg w={21} h={20}>
            <path d="M1 1h19v18H1zM1 11h12V1M7 1v10" stroke="#262626" />
          </Svg>
        </Btn>
        <Btn label="Zoom arrière" className="w-7">
          <Svg w={12} h={12}>
            <path d="M0 6h12" />
          </Svg>
        </Btn>
        <input
          type="range"
          aria-label="Zoom"
          defaultValue={50}
          className="h-4 w-[148px] appearance-none bg-[linear-gradient(#666,#666)] bg-[length:100%_2px] bg-center bg-no-repeat [&::-webkit-slider-thumb]:h-4 [&::-webkit-slider-thumb]:w-2 [&::-webkit-slider-thumb]:appearance-none [&::-webkit-slider-thumb]:bg-[#666]"
        />
        <Btn label="Zoom avant" className="w-7">
          <Svg w={12} h={12}>
            <path d="M0 6h12M6 0v12" />
          </Svg>
        </Btn>
        <button className="w-[61px] pr-[7px] text-right whitespace-nowrap">100 %</button>
      </div>
    </footer>
  )
}

export default function App() {
  return (
    <div className="relative flex h-screen flex-col overflow-hidden bg-[#efefef] font-['Open_Sans',sans-serif]">
      <MenuBar />
      <Ribbon />
      <FormulaBar />
      <div className="mt-[10px] flex min-h-0 flex-1">
        <VerticalScroll />
        <Grid />
      </div>
      <SheetBar />
      <StatusBar />
      <div dir="rtl" className="pointer-events-none absolute top-[220px] left-[652px] font-['DejaVu_Sans',sans-serif] text-[64px] leading-[80px] font-bold whitespace-nowrap text-[#3367d6]">
        تعليم <span className="text-[#cc9a2a]">بريس</span>
      </div>
    </div>
  )
}
